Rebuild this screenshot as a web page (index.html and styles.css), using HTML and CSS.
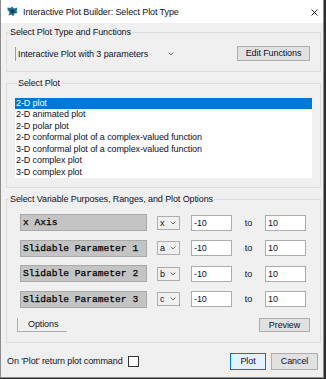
FILE: index.html
```html
<!DOCTYPE html>
<html lang="en">
<head>
    <meta charset="UTF-8">
    <meta name="viewport" content="width=device-width, initial-scale=1.0">
    <title>Interactive Plot Builder</title>
    <link rel="stylesheet" href="styles.css">
</head>
<body>
    <div class="window">
        <div class="titlebar">
            <svg class="app-icon" width="11" height="11" viewBox="0 0 11 11">
                <path d="M0.5 1.5 L3.5 2 L5 0.5 L7 2.5 L10.5 1.5 L9.5 5 L10.5 7 L7.5 7.5 L6 10.5 L4.5 8.5 L1.5 9.5 L2.5 6 L0.5 4 Z" fill="#1d6f92"/>
                <path d="M3 4 L6.5 3.5 L8 6 L5 7.5 Z" fill="#0b3b57"/>
            </svg>
            <span class="title">Interactive Plot Builder: Select Plot Type</span>
            <svg class="close" width="7" height="7" viewBox="0 0 7 7">
                <path d="M0.5 0.5 L6.5 6.5 M6.5 0.5 L0.5 6.5" stroke="#111" stroke-width="0.9"/>
            </svg>
        </div>

        <div class="content">
            <fieldset class="group group-type">
                <legend>Select Plot Type and Functions</legend>
                <div class="type-row">
                    <div class="combo">
                        <span>Interactive Plot with 3 parameters</span>
                        <svg class="chevron" width="6" height="4" viewBox="0 0 6 4"><polyline points="0.5,0.5 3,3 5.5,0.5" fill="none" stroke="#666" stroke-width="0.9"/></svg>
                    </div>
                    <button class="btn">Edit Functions</button>
                </div>
            </fieldset>

            <fieldset class="group group-plot">
                <legend>Select Plot</legend>
                <ul class="listbox">
                    <li class="selected">2-D plot</li>
                    <li>2-D animated plot</li>
                    <li>2-D polar plot</li>
                    <li>2-D conformal plot of a complex-valued function</li>
                    <li>3-D conformal plot of a complex-valued function</li>
                    <li>2-D complex plot</li>
                    <li>3-D complex plot</li>
                </ul>
            </fieldset>

            <fieldset class="group group-vars">
                <legend>Select Variable Purposes, Ranges, and Plot Options</legend>
                <div class="var-grid">
                    <div class="var-name">x Axis</div>
                    <div class="var-pick">x <svg class="chevron" width="6" height="4" viewBox="0 0 6 4"><polyline points="0.5,0.5 3,3 5.5,0.5" fill="none" stroke="#666" stroke-width="0.9"/></svg></div>
                    <div class="num-box">-10</div>
                    <div class="to">to</div>
                    <div class="num-box">10</div>

                    <div class="var-name">Slidable Parameter 1</div>
                    <div class="var-pick">a <svg class="chevron" width="6" height="4" viewBox="0 0 6 4"><polyline points="0.5,0.5 3,3 5.5,0.5" fill="none" stroke="#666" stroke-width="0.9"/></svg></div>
                    <div class="num-box">-10</div>
                    <div class="to">to</div>
                    <div class="num-box">10</div>

                    <div class="var-name">Slidable Parameter 2</div>
                    <div class="var-pick">b <svg class="chevron" width="6" height="4" viewBox="0 0 6 4"><polyline points="0.5,0.5 3,3 5.5,0.5" fill="none" stroke="#666" stroke-width="0.9"/></svg></div>
                    <div class="num-box">-10</div>
                    <div class="to">to</div>
                    <div class="num-box">10</div>

                    <div class="var-name">Slidable Parameter 3</div>
                    <div class="var-pick">c <svg class="chevron" width="6" height="4" viewBox="0 0 6 4"><polyline points="0.5,0.5 3,3 5.5,0.5" fill="none" stroke="#666" stroke-width="0.9"/></svg></div>
                    <div class="num-box">-10</div>
                    <div class="to">to</div>
                    <div class="num-box">10</div>
                </div>
                <div class="options-row">
                    <button class="btn btn-options">Options</button>
                    <button class="btn btn-preview">Preview</button>
                </div>
            </fieldset>

            <div class="footer">
                <label class="check-label">On 'Plot' return plot command <span class="checkbox"></span></label>
                <div class="footer-buttons">
                    <button class="btn btn-default">Plot</button>
                    <button class="btn btn-cancel">Cancel</button>
                </div>
            </div>
        </div>
    </div>
</body>
</html>
```

FILE: styles.css
```css
body {
    margin: 0;
    background-color: #2e2e2e;
    font-family: "Liberation Sans", Arial, sans-serif;
    font-size: 9px;
    letter-spacing: -0.1px;
    color: #10102a;
}
.window {
    width: 322px;
    height: 377px;
    background-color: #f0f0f0;
    border: 1px solid #8c8c8c;
    border-top: none;
}

/* Title bar */
.titlebar {
    height: 23px;
    background-color: #fff;
    display: flex;
    align-items: center;
    padding-left: 6px;
    padding-right: 5px;
}
.app-icon { margin-right: 5px; }
.title { flex: 1; }
.close { margin-top: 1px; }

.content {
    padding: 4px 2px 0 5px;
}

/* Group boxes */
.group {
    box-sizing: border-box;
    margin: 0;
    padding: 0;
    width: 315px;
    min-width: 0;
    border: 1px solid #dcdcdc;
}
.group legend {
    margin-left: 2px;
    padding: 0 1px;
    line-height: 11px;
}
.group-plot, .group-vars { margin-top: 6px; }

.type-row {
    display: flex;
    justify-content: space-between;
    align-items: center;
    padding: 8px 10px 10px 8px;
}
.combo {
    width: 156px;
    height: 14px;
    display: flex;
    align-items: center;
    justify-content: space-between;
    padding: 0 3px 0 2px;
    border-left: 1px solid #9c9c9c;
}
.btn {
    font-family: inherit;
    font-size: 9px;
    letter-spacing: -0.1px;
    color: #10102a;
    background-color: #e1e1e1;
    border: 1px solid #adadad;
    margin: 0;
    padding: 0;
    height: 15px;
    line-height: 13px;
}
.type-row .btn { width: 73px; }

/* List */
.group-plot { padding: 9px 8px 9px 8px; }
.listbox {
    list-style: none;
    margin: 0;
    padding: 0;
    height: 80px;
    background-color: #fff;
}
.listbox li {
    height: 11.43px;
    line-height: 11.43px;
    padding-left: 1px;
    white-space: nowrap;
}
.listbox li.selected {
    background-color: #0078d7;
    color: #fff;
}

/* Variables */
.group-vars { padding: 9px 0 10px 0; }
.var-grid {
    display: grid;
    grid-template-columns: 137px 34px 41px 33px 41px;
    row-gap: 8.67px;
    padding-left: 13px;
    align-items: center;
}
.var-grid .to { text-align: center; }
.var-name {
    width: 127px;
    box-sizing: border-box;
    height: 17px;
    line-height: 15px;
    background-color: #c4c4c4;
    border: 1px solid #a9a9a9;
    font-family: "Liberation Mono", "Courier New", monospace;
    font-size: 9.6px;
    letter-spacing: 0;
    color: #000;
    -webkit-text-stroke: 0.25px #000;
    padding-left: 2px;
    white-space: pre;
}
.var-pick {
    width: 23px;
    box-sizing: border-box;
    height: 14px;
    border: 1px solid #adadad;
    display: flex;
    align-items: center;
    justify-content: space-between;
    padding: 0 3px 0 2px;
}
.num-box {
    box-sizing: border-box;
    height: 16px;
    line-height: 14px;
    background-color: #fff;
    border: 1px solid #adadad;
    padding-left: 2px;
}

.options-row {
    display: flex;
    justify-content: space-between;
    margin-top: 10px;
    padding: 0 10px 0 10px;
}
.btn-options {
    width: 50px;
    height: 14px;
    background: none;
    border: none;
    border-left: 1px solid #adadad;
    border-bottom: 1px solid #adadad;
    text-align: left;
    padding-left: 10px;
}
.btn-preview { width: 51px; height: 14px; }

/* Footer */
.footer {
    display: flex;
    justify-content: space-between;
    align-items: center;
    padding: 10px 3px 0 1px;
}
.check-label {
    display: flex;
    align-items: center;
    gap: 5px;
}
.checkbox {
    width: 9px;
    height: 9px;
    background-color: #fff;
    border: 1px solid #333;
}
.footer-buttons {
    display: flex;
    gap: 5px;
}
.footer-buttons .btn { height: 17px; line-height: 15px; }
.btn-default {
    width: 36px;
    background-color: #e5f1fb;
    border-color: #0078d7;
}
.btn-cancel { width: 47px; }
```
